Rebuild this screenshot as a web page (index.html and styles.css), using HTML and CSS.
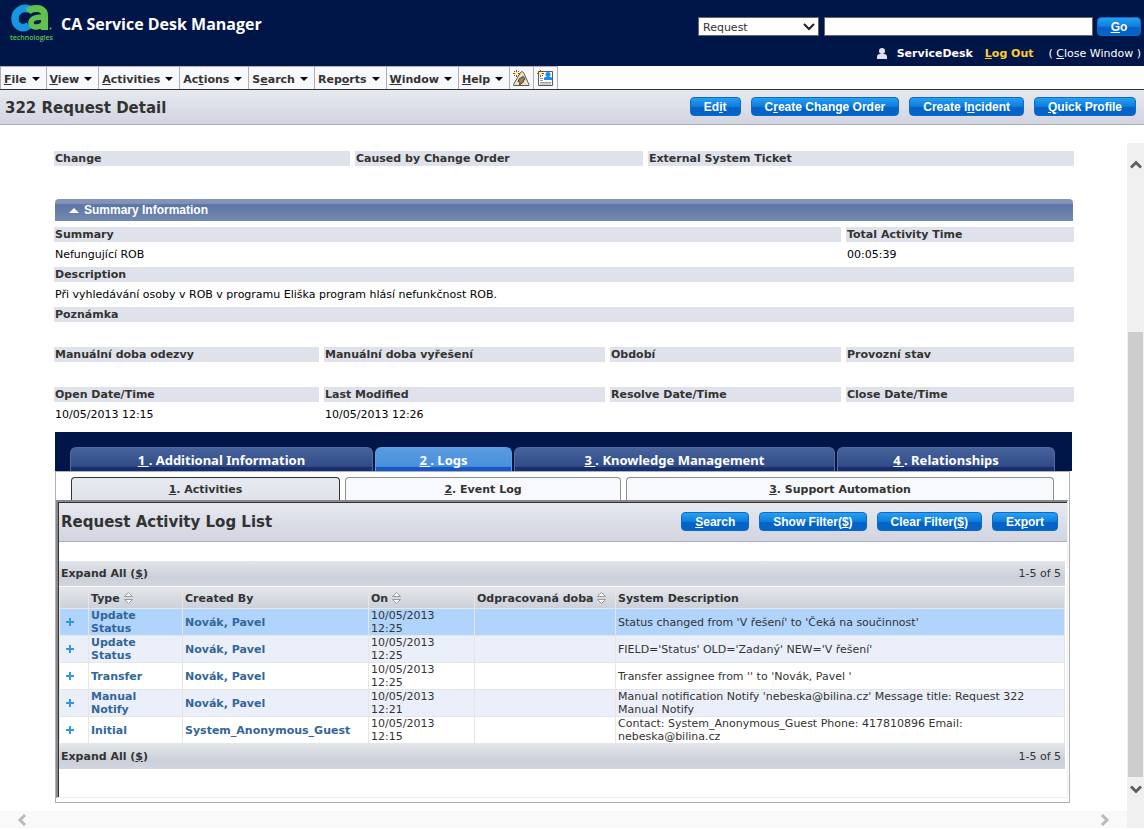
FILE: index.html
```html
<!DOCTYPE html>
<html lang="en">
<head>
<meta charset="utf-8">
<title>322 Request Detail</title>
<link rel="stylesheet" href="styles.css">
</head>
<body>
<header class="banner">
  <div class="brand">
    <svg class="logo" viewBox="0 0 46 38" role="img" aria-label="CA technologies">
      <path d="M20 5.500C12 2 5 7.500 5 14.500 5 22 12 26.500 19 21.500" fill="none" stroke="#1496e0" stroke-width="7.500"/>
      <path d="M18 7.500C22 3.500 34.500 2.500 34.500 11V26" fill="none" stroke="#5fc24f" stroke-width="7"/>
      <path d="M34 13.500c-7-1-13 .5-13 5.500 0 6 11 5 13-1" fill="none" stroke="#5fc24f" stroke-width="5.500"/>
      <circle cx="40.500" cy="24.500" r="1" fill="#5fc24f"/>
      <text x="0" y="36" class="logo-text">technologies</text>
    </svg>
    <h1 class="product">CA Service Desk Manager</h1>
  </div>
  <div class="tools">
    <form class="finder">
      <select class="kind" aria-label="Record type"><option>Request</option></select>
      <input class="query" type="text" aria-label="Search text">
      <button class="btn" type="button"><u>G</u>o</button>
    </form>
    <div class="session">
      <svg class="person" viewBox="0 0 10 11"><circle cx="5" cy="3" r="3" fill="#dfe2ee"/><path d="M0 11V9q0-3 3-3h4q3 0 3 3v2z" fill="#dfe2ee"/></svg>
      <b class="user">ServiceDesk</b>
      <a class="logout" href="#"><u>L</u>og Out</a>
      <a class="close" href="#">( <u>C</u>lose Window )</a>
    </div>
  </div>
</header>
<nav class="menu">
  <button type="button" class="item"><span><u>F</u>ile</span><i class="caret"></i></button>
  <button type="button" class="item"><span><u>V</u>iew</span><i class="caret"></i></button>
  <button type="button" class="item"><span><u>A</u>ctivities</span><i class="caret"></i></button>
  <button type="button" class="item"><span>Ac<u>t</u>ions</span><i class="caret"></i></button>
  <button type="button" class="item"><span>S<u>e</u>arch</span><i class="caret"></i></button>
  <button type="button" class="item"><span>Rep<u>o</u>rts</span><i class="caret"></i></button>
  <button type="button" class="item"><span><u>W</u>indow</span><i class="caret"></i></button>
  <button type="button" class="item"><span><u>H</u>elp</span><i class="caret"></i></button>
  <button type="button" class="item icon" aria-label="New incident">
    <svg viewBox="0 0 17 17"><path d="M7.500 2.500Q9 .5 10.500 2.500L16 14.500v1H.5v-1z" fill="#eee5bb" stroke="#555b60"/><path d="M6.500 8.500l4-2 1.500 3-2 1 .5 1.500-4 3 .5-3-2-.5z" fill="#a07f68" stroke="#594035"/><path d="M1 1h1v1H1zM3 0h1v2H3zM5 1h1v1H5zM0 3h2v1H0zM5 3h2v1H5zM1 5h1v1H1zM3 5h1v2H3zM5 5h1v1H5z" fill="#8b4d10"/><path d="M2 2h3v3H2z" fill="#ffe99a"/></svg>
  </button>
  <button type="button" class="item icon" aria-label="New profile">
    <svg viewBox="0 0 17 17"><path d="M1.500 1.500h14v14h-14z" fill="#fff" stroke="#555b60"/><circle cx="11" cy="4.500" r="2.500" fill="#168cf0"/><path d="M7 10V8q0-1 2-1h4q2 0 2 1v2z" fill="#168cf0"/><path d="M3 8.500h3M3 10.500h3M3 12.500h11M3 14h11" stroke="#999"/><path d="M1 1h1v1H1zM3 0h1v2H3zM5 1h1v1H5zM0 3h2v1H0zM5 3h2v1H5zM1 5h1v1H1zM3 5h1v2H3zM5 5h1v1H5z" fill="#8b4d10"/><path d="M2 2h3v3H2z" fill="#ffe99a"/></svg>
  </button>
</nav>
<section class="titlebar">
  <h2>322 Request Detail</h2>
  <div class="actions">
    <button class="btn" type="button">Ed<u>i</u>t</button>
    <button class="btn" type="button">C<u>r</u>eate Change Order</button>
    <button class="btn" type="button">Create I<u>n</u>cident</button>
    <button class="btn" type="button"><u>Q</u>uick Profile</button>
  </div>
</section>
<div class="workspace">
  <main class="detail">
    <dl class="fields top">
      <div><dt>Change</dt><dd></dd></div>
      <div><dt>Caused by Change Order</dt><dd></dd></div>
      <div><dt>External System Ticket</dt><dd></dd></div>
    </dl>
    <button type="button" class="section"><i class="up"></i>Summary Information</button>
    <dl class="fields two">
      <div><dt>Summary</dt><dd>Nefungující ROB</dd></div>
      <div><dt>Total Activity Time</dt><dd>00:05:39</dd></div>
    </dl>
    <dl class="fields">
      <div><dt>Description</dt><dd>Při vyhledávání osoby v ROB v programu Eliška program hlásí nefunkčnost ROB.</dd></div>
      <div><dt>Poznámka</dt><dd></dd></div>
    </dl>
    <dl class="fields four">
      <div><dt>Manuální doba odezvy</dt><dd></dd></div>
      <div><dt>Manuální doba vyřešení</dt><dd></dd></div>
      <div><dt>Období</dt><dd></dd></div>
      <div><dt>Provozní stav</dt><dd></dd></div>
      <div><dt>Open Date/Time</dt><dd>10/05/2013 12:15</dd></div>
      <div><dt>Last Modified</dt><dd>10/05/2013 12:26</dd></div>
      <div><dt>Resolve Date/Time</dt><dd></dd></div>
      <div><dt>Close Date/Time</dt><dd></dd></div>
    </dl>
    <div class="tabs">
      <button type="button" class="tab"><u>1 </u>. Additional Information</button>
      <button type="button" class="tab on"><u>2 </u>. Logs</button>
      <button type="button" class="tab"><u>3 </u>. Knowledge Management</button>
      <button type="button" class="tab"><u>4 </u>. Relationships</button>
    </div>
    <div class="panel">
      <div class="subtabs">
        <button type="button" class="subtab on"><u>1</u>. Activities</button>
        <button type="button" class="subtab"><u>2</u>. Event Log</button>
        <button type="button" class="subtab"><u>3</u>. Support Automation</button>
      </div>
      <div class="frame">
        <div class="listhead">
          <h2>Request Activity Log List</h2>
          <div class="actions">
            <button class="btn" type="button"><u>S</u>earch</button>
            <button class="btn" type="button">Show Filter(<u>$</u>)</button>
            <button class="btn" type="button">Clear Filter(<u>$</u>)</button>
            <button class="btn" type="button">Ex<u>p</u>ort</button>
          </div>
        </div>
        <div class="list">
          <div class="strip"><a href="#">Expand All (<u>$</u>)</a><span>1-5 of 5</span></div>
          <table class="log">
            <colgroup><col class="c1"><col class="c2"><col class="c3"><col class="c4"><col class="c5"><col></colgroup>
            <thead><tr>
              <th></th>
              <th>Type <svg class="sort" viewBox="0 0 9 12"><path d="M.5 4.500L4.500.5l4 4zM.5 7.500l4 4 4-4z"/></svg></th>
              <th>Created By</th>
              <th>On <svg class="sort" viewBox="0 0 9 12"><path d="M.5 4.500L4.500.5l4 4zM.5 7.500l4 4 4-4z"/></svg></th>
              <th>Odpracovaná doba <svg class="sort" viewBox="0 0 9 12"><path d="M.5 4.500L4.500.5l4 4zM.5 7.500l4 4 4-4z"/></svg></th>
              <th>System Description</th>
            </tr></thead>
            <tbody>
              <tr class="sel"><td><button type="button" class="plus" aria-label="Expand"></button></td><td><a href="#">Update Status</a></td><td><a href="#">Novák, Pavel</a></td><td>10/05/2013 12:25</td><td></td><td>Status changed from 'V řešení' to 'Čeká na součinnost'</td></tr>
              <tr class="alt"><td><button type="button" class="plus" aria-label="Expand"></button></td><td><a href="#">Update Status</a></td><td><a href="#">Novák, Pavel</a></td><td>10/05/2013 12:25</td><td></td><td>FIELD='Status' OLD='Zadaný' NEW='V řešení'</td></tr>
              <tr><td><button type="button" class="plus" aria-label="Expand"></button></td><td><a href="#">Transfer</a></td><td><a href="#">Novák, Pavel</a></td><td>10/05/2013 12:25</td><td></td><td>Transfer assignee from '' to 'Novák, Pavel '</td></tr>
              <tr class="alt"><td><button type="button" class="plus" aria-label="Expand"></button></td><td><a href="#">Manual Notify</a></td><td><a href="#">Novák, Pavel</a></td><td>10/05/2013 12:21</td><td></td><td>Manual notification Notify 'nebeska@bilina.cz' Message title: Request 322 Manual Notify</td></tr>
              <tr><td><button type="button" class="plus" aria-label="Expand"></button></td><td><a href="#">Initial</a></td><td><a href="#">System_Anonymous_Guest</a></td><td>10/05/2013 12:15</td><td></td><td>Contact: System_Anonymous_Guest Phone: 417810896 Email: nebeska@bilina.cz</td></tr>
            </tbody>
          </table>
          <div class="strip"><a href="#">Expand All (<u>$</u>)</a><span>1-5 of 5</span></div>
        </div>
      </div>
    </div>
  </main>
  <div class="vscroll">
    <svg class="arrow" viewBox="0 0 12 10"><path d="M1 8.500l5-5 5 5" /></svg>
    <div class="thumb"></div>
    <svg class="arrow" viewBox="0 0 12 10"><path d="M1 1.500l5 5 5-5" /></svg>
  </div>
  <div class="hscroll">
    <svg class="arrow" viewBox="0 0 12 12"><path d="M9 1L4 6l5 5" /></svg>
    <svg class="arrow" viewBox="0 0 12 12"><path d="M3 1l5 5-5 5" /></svg>
  </div>
</div>
</body>
</html>
```
FILE: styles.css
```css
* { box-sizing: border-box; }
body {
  margin: 0;
  min-height: 100vh;
  display: flex;
  flex-direction: column;
  background: #fff;
  color: #333;
  font: 11px/13px Verdana, "DejaVu Sans", sans-serif;
}
h1, h2, dl, dd { margin: 0; }
button { font: inherit; color: inherit; border: 0; padding: 0; margin: 0; background: none; }
a { color: inherit; text-decoration: none; }
svg { display: block; }

.banner { display: flex; justify-content: space-between; height: 66px; background: #001648; color: #fff; }
.brand { display: flex; gap: 5px; padding: 4px 0 0 10px; }
.logo { width: 46px; height: 38px; }
.logo-text { font: 600 7px "Open Sans", sans-serif; fill: #5fc24f; }
.product { font: bold 16px/24px "Open Sans", sans-serif; padding-top: 8px; }
.tools { padding: 17px 3px 0 0; }
.finder { display: flex; gap: 5px; }
.kind {
  width: 121px; height: 19px; padding: 1px 4px 0; border: 1px solid #666; border-radius: 0;
  font: inherit; color: #333; appearance: none;
  background: #fff url("data:image/svg+xml,%3Csvg xmlns='http://www.w3.org/2000/svg' width='12' height='8'%3E%3Cpath d='M1 1l5 5 5-5' fill='none' stroke='%23222' stroke-width='2'/%3E%3C/svg%3E") no-repeat right 3px center;
}
.query { width: 269px; height: 19px; border: 1px solid #666; padding: 0 4px; font: inherit; }
.finder .btn { width: 44px; padding: 1px 0 0; margin-left: -1px; }
.session { display: flex; align-items: center; justify-content: flex-end; padding-top: 11px; }
.person { width: 10px; height: 11px; margin-right: 10px; }
.logout { color: #fc3; font-weight: bold; margin: 0 15px 0 12px; }

.btn {
  height: 19px; padding: 1px 13px 0; border-radius: 4px; border: 1px solid #0a6cc8; color: #fff; white-space: nowrap;
  font: bold 12px/16px "Liberation Sans", Arial, sans-serif;
  background: linear-gradient(#26a0f4, #0f7cdc 50%, #0563c6 55%, #0463c8);
}
.actions { display: flex; gap: 10px; padding-bottom: 2px; }

.menu { display: flex; height: 24px; border-bottom: 1px solid #333; }
.item {
  display: flex; align-items: center; gap: 5px; padding: 2px 6px 0 3px; border: solid #adafbe; border-width: 1px 1px 0 0;
  background: #f8f9fc; font-weight: bold;
}
.item:first-child { border-left-width: 1px; }
.caret { border: 4px solid transparent; border-top-color: #000; border-bottom: 0; }
.item.icon { padding: 0 3px; }
.icon svg { width: 17px; height: 17px; }

.titlebar, .listhead { display: flex; align-items: center; justify-content: space-between; background: linear-gradient(#e6e9ef, #d2d5e0); border-bottom: 1px solid #adafbe; }
.titlebar { height: 35px; padding: 0 8px 0 5px; }
.titlebar h2, .listhead h2 { font-size: 15px; line-height: 18px; }
.titlebar h2 { padding-top: 2px; }

.workspace { flex: 1; display: grid; grid-template-columns: 1fr 17px; grid-template-rows: 1fr 17px; padding: 18px 0 2px; }
.detail { padding: 8px 53px 0 54px; }
.fields { display: grid; column-gap: 5px; }
.fields.top { grid-template-columns: 296fr 288fr 426fr; padding-bottom: 8px; }
.fields.two { grid-template-columns: 787fr 228fr; padding-top: 6px; }
.fields.four { grid-template-columns: 265fr 281fr 231fr 228fr; padding-bottom: 5px; }
dt { padding: 1px 1px 0; height: 15px; line-height: 14px; font-weight: bold; background: #dfe2ea; }
dd { padding: 5px 1px 0; height: 25px; line-height: 16px; color: #000; }
.section {
  display: flex; align-items: center; gap: 5px; width: calc(100% - 2px); margin-left: 1px; height: 22px; padding: 1px 0 0 14px; color: #fff;
  border-radius: 4px 4px 0 0; font: bold 12px/21px "Liberation Sans", Arial, sans-serif;
  background: linear-gradient(#8494b8, #8093b6 20%, #5a74a4 26%, #758ab0);
}
.up { border: 5px solid transparent; border-bottom-color: #fff; border-top: 0; }

.tabs { display: grid; grid-template-columns: 303fr 137fr 321fr 218fr; gap: 2px; height: 39px; margin: 0 2px 0 1px; padding: 15px 17px 0 15px; background: #001648; }
.tab {
  border: 1px solid #526a9e; border-bottom: 0; border-radius: 6px 6px 0 0; color: #fff;
  font: bold 13px/22px "Noto Sans", "DejaVu Sans", sans-serif; background: linear-gradient(#47639c, #304b86 80%, #152f70 84%);
}
.tab.on { border-color: #5c9fe4; background: linear-gradient(#5a9be0, #4890dc 80%, #1758c6 84%); }
.panel { margin: 0 4px 0 1px; padding: 5px 1px 4px 0; border: 1px solid #adafbe; }
.subtabs { display: grid; grid-template-columns: 269fr 276fr 428fr; gap: 5px; padding: 0 14px 0 15px; height: 23px; }
.subtab { border: 1px solid #8e8e8e; border-bottom: 0; border-radius: 4px 4px 0 0; font-weight: bold; background: #f8f9fc; }
.subtab.on { border-color: #333; background: linear-gradient(#e7eaf0, #dfe2ea); }
.frame { border: 1px solid #eee; border-top: 2px solid #888; border-left: 2px solid #888; box-shadow: inset 1px 1px #333; min-height: 298px; padding-top: 1px; }
.listhead { height: 39px; padding: 0 9px 0 2px; margin-left: 1px; }
.list { padding: 19px 2px 0 1px; }
.strip { display: flex; justify-content: space-between; align-items: center; height: 25px; padding: 0 4px 0 2px; background: linear-gradient(#e2e5e9, #cbd0d9 65%, #d2d5e0); }
.strip a { font-weight: bold; }
.log { width: 100%; table-layout: fixed; border-collapse: collapse; margin-top: 1px; }
.c1 { width: 29px; } .c2 { width: 94px; } .c3 { width: 186px; } .c4 { width: 106px; } .c5 { width: 141px; }
.log th, .log td { border: 1px solid #e6e6e6; padding: 0 10px 0 2px; text-align: left; }
.log th { height: 21px; padding-right: 0; white-space: nowrap; }
.log thead { background: linear-gradient(#e2e5e9, #cbd0d9); }
.log td { height: 27px; }
.log a { color: #369; font-weight: bold; }
.sel { background: #b0d4fc; }
.alt { background: #ebeff9; }
.sort { display: inline-block; width: 9px; height: 12px; vertical-align: -2px; fill: #fff; stroke: #999; }
.plus { display: block; width: 8px; height: 8px; margin-left: 4px; background: linear-gradient(#39d, #39d) center / 8px 2px no-repeat, linear-gradient(#39d, #39d) center / 2px 8px no-repeat; }

.vscroll { grid-row: 1 / 3; grid-column: 2; display: grid; grid-template-rows: 189px 1fr 51px; justify-items: center; background: #f0f0f0; }
.arrow { width: 12px; height: 12px; fill: none; stroke: #606060; stroke-width: 3; }
.vscroll .arrow { margin-top: 15px; }
.vscroll .arrow:last-child { margin-top: 7px; }
.thumb { width: 15px; background: #cdcdcd; }
.hscroll { display: flex; align-items: center; justify-content: space-between; padding: 0 16px; background: #f9f9f9; }
.hscroll .arrow { stroke: #bbb; }
```
